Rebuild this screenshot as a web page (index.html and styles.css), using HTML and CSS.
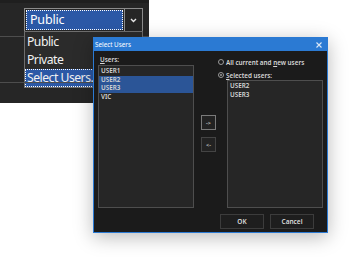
FILE: index.html
```html
<!DOCTYPE html>
<html lang="en">
<head>
  <meta charset="UTF-8">
  <title>Select Users</title>
  <link rel="stylesheet" href="styles.css">
</head>
<body>

  <div class="sheet">
    <div class="sheet-top"></div>
    <div class="sheet-row first">
      <div class="combo">
        <div class="combo-value">Public</div>
        <div class="combo-button">
          <svg width="7" height="5" viewBox="0 0 7 5"><polyline points="1,1 3.5,3.5 6,1" fill="none" stroke="#e6e6e6" stroke-width="1.4"/></svg>
        </div>
      </div>
      <ul class="dropdown">
        <li>Public</li>
        <li>Private</li>
        <li class="active">Select Users.</li>
      </ul>
    </div>
    <div class="sheet-row second"></div>
    <div class="sheet-row third"></div>
  </div>

  <div class="dialog">
    <div class="titlebar">
      <span>Select Users</span>
      <svg width="6" height="6" viewBox="0 0 6 6"><path d="M0.5 0.5 L5.5 5.5 M5.5 0.5 L0.5 5.5" stroke="#dbe8f7" stroke-width="1.1"/></svg>
    </div>
    <div class="dialog-body">
      <div class="columns">
        <div class="col-left">
          <div class="label"><u>U</u>sers:</div>
          <ul class="listbox">
            <li>USER1</li>
            <li class="selected">USER2</li>
            <li class="selected">USER3</li>
            <li>VIC</li>
          </ul>
        </div>
        <div class="col-middle">
          <button class="small-btn default">-&gt;</button>
          <button class="small-btn">&lt;-</button>
        </div>
        <div class="col-right">
          <label class="radio"><span class="dot"></span><span>All current and <u>n</u>ew users</span></label>
          <label class="radio"><span class="dot checked"></span><span><u>S</u>elected users:</span></label>
          <ul class="listbox right-list">
            <li>USER2</li>
            <li>USER3</li>
          </ul>
        </div>
      </div>
      <div class="footer">
        <button class="btn">OK</button>
        <button class="btn">Cancel</button>
      </div>
    </div>
  </div>

</body>
</html>
```

FILE: styles.css
```css
body {
  margin: 0;
  background-color: #fff;
  font-family: "Noto Sans", "Open Sans", sans-serif;
  width: 351px;
  height: 257px;
  overflow: hidden;
  position: relative;
}

ul {
  list-style: none;
  margin: 0;
  padding: 0;
}

/* dark grid behind the dialog */
.sheet {
  width: 149px;
  height: 103px;
  background-color: #262626;
}

.sheet-top {
  height: 3px;
  background-color: #1f1f1f;
}

.sheet-row {
  border-bottom: 1px solid #4d4d4d;
  position: relative;
}

.sheet-row.first {
  height: 34px;
  padding-top: 5px;
  box-sizing: border-box;
}

.sheet-row.second {
  height: 45px;
}

.sheet-row.third {
  border-bottom: none;
}

.combo {
  margin-left: 24px;
  width: 119px;
  height: 24px;
  box-sizing: border-box;
  border: 1px solid #8c8c8c;
  display: flex;
  background-color: #262626;
}

.combo-value {
  margin: 1px;
  width: 97px;
  box-sizing: border-box;
  border: 1px dotted #fff;
  background-color: #2b58a6;
  color: #fff;
  font-size: 12.5px;
  letter-spacing: -0.2px;
  line-height: 18px;
  padding-left: 3px;
}

.combo-button {
  flex: 1;
  border-left: 1px solid #8c8c8c;
  display: flex;
  align-items: center;
  justify-content: center;
}

/* open list of the combo */
.dropdown {
  position: absolute;
  left: 24px;
  top: 28px;
  width: 119px;
  height: 57px;
  box-sizing: border-box;
  border: 1px solid #6e6e6e;
  background-color: #2b2b2b;
  padding-top: 1px;
}

.dropdown li {
  height: 18px;
  line-height: 17px;
  color: #f2f2f2;
  font-size: 12.2px;
  letter-spacing: -0.5px;
  padding-left: 2px;
  box-sizing: border-box;
  white-space: nowrap;
}

.dropdown li.active {
  background-color: #2b58a6;
  border: 1px dotted #fff;
  padding-left: 1px;
  line-height: 15px;
}

/* Select Users dialog */
.dialog {
  position: absolute;
  left: 93px;
  top: 37px;
  width: 235px;
  height: 196px;
  box-sizing: border-box;
  border: 1px solid #2b7ad3;
  background-color: #1b1b1b;
  box-shadow: 0 4px 18px rgba(0, 0, 0, 0.28);
  display: flex;
  flex-direction: column;
  font-size: 6.3px;
  font-weight: 600;
  color: #d6d6d6;
}

.titlebar {
  height: 13px;
  background-color: #2b7ad3;
  color: #fff;
  font-weight: 400;
  display: flex;
  align-items: center;
  justify-content: space-between;
  padding: 0 5px 0 1px;
}

.dialog-body {
  flex: 1;
  display: flex;
  flex-direction: column;
  padding: 5px 4px 2px 4px;
}

.columns {
  display: flex;
  height: 152px;
}

.col-left {
  width: 96px;
  display: flex;
  flex-direction: column;
}

.label {
  height: 9px;
  line-height: 8px;
  padding-left: 2px;
}

.listbox {
  flex: 1;
  border: 1px solid #4e4e4e;
  background-color: #262626;
  padding-top: 1px;
}

.listbox li {
  height: 8.5px;
  line-height: 8.5px;
  padding-left: 2px;
}

.listbox li.selected {
  background-color: #2b5597;
}

.col-middle {
  width: 15px;
  margin-left: 7px;
  padding-top: 59px;
  display: flex;
  flex-direction: column;
  gap: 7px;
}

.small-btn {
  width: 15px;
  height: 15px;
  padding: 0;
  border: 1px solid #444;
  background-color: #222;
  color: #cfcfcf;
  font-family: "Noto Sans", sans-serif;
  font-size: 5.5px;
  font-weight: 600;
}

.small-btn.default {
  border-color: #7a7a7a;
}

.col-right {
  flex: 1;
  margin-left: 2px;
  display: flex;
  flex-direction: column;
}

.radio {
  display: flex;
  align-items: center;
  height: 8px;
  margin-top: 2px;
  margin-bottom: 3px;
  gap: 2px;
}

.dot {
  width: 6px;
  height: 6px;
  box-sizing: border-box;
  border: 1px solid #9a9a9a;
  border-radius: 50%;
  position: relative;
}

.dot.checked::after {
  content: "";
  position: absolute;
  left: 1px;
  top: 1px;
  width: 2px;
  height: 2px;
  border-radius: 50%;
  background-color: #9a9a9a;
}

.right-list {
  margin-left: 9px;
  margin-top: -2px;
}

.footer {
  display: flex;
  justify-content: flex-end;
  gap: 6px;
  padding-right: 9px;
  margin-top: 6px;
}

.btn {
  width: 44px;
  height: 15px;
  padding: 0;
  border: 1px solid #3c3c3c;
  background-color: #1e1e1e;
  color: #dcdcdc;
  font-family: "Noto Sans", sans-serif;
  font-size: 6.5px;
  font-weight: 600;
}
```
